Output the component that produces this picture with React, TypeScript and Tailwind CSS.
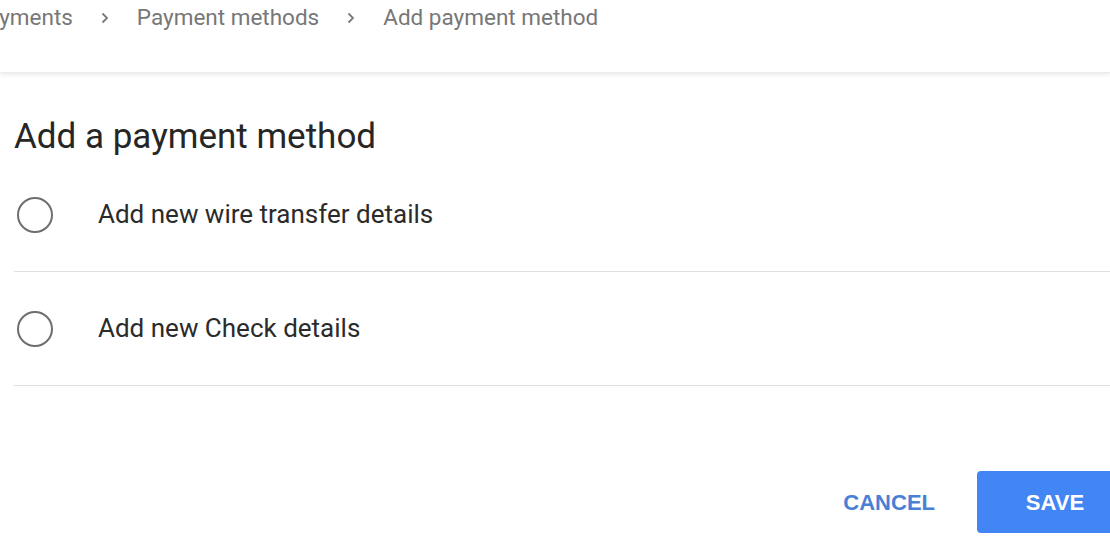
import React from "react";

function Chevron() {
  return (
    <svg width="8" height="12" viewBox="0 0 8 12" className="mx-[28px] mt-[2px]">
      <path d="M1.5 1.5 L6 6 L1.5 10.5" fill="none" stroke="#7a7a7a" strokeWidth="1.8" />
    </svg>
  );
}

function Option({ label }: { label: string }) {
  return (
    <div className="flex h-[114px] items-center border-b border-[#e0e0e0]">
      <div className="ml-[3px] h-[36px] w-[36px] rounded-full border-[2.5px] border-[#6e6e6e]" />
      <span className="ml-[45px] text-[26px] text-[#2b2b2b]">{label}</span>
    </div>
  );
}

export default function App() {
  return (
    <div
      className="relative h-[550px] w-[1110px] overflow-hidden bg-white"
      style={{ fontFamily: "Roboto, 'Noto Sans', sans-serif" }}
    >
      <div className="h-[73px] shadow-[0_2px_4px_rgba(0,0,0,0.08)] border-b border-[#ececec]">
        <div className="flex items-center text-[22.5px] leading-[34px] text-[#777777] ml-[-27px]">
          <span>Payments</span>
          <Chevron />
          <span>Payment methods</span>
          <Chevron />
          <span>Add payment method</span>
        </div>
      </div>
      <div className="pl-[14px]">
        <h1 className="mt-[44px] text-[35px] leading-[40px] text-[#262626]">Add a payment method</h1>
        <div className="mt-[1px]">
          <Option label="Add new wire transfer details" />
          <Option label="Add new Check details" />
        </div>
        <div className="mt-[85px] flex items-center justify-end">
          <button
            className="mr-[42px] text-[22px] font-bold text-[#4a7fd6]"
            style={{ fontFamily: "'Liberation Sans', Arial, sans-serif" }}
          >
            CANCEL
          </button>
          <button
            className="mr-[-20px] h-[62px] w-[153px] rounded-[4px] bg-[#4285f4] pl-[3px] text-[22px] font-bold text-white"
            style={{ fontFamily: "'Liberation Sans', Arial, sans-serif" }}
          >
            SAVE
          </button>
        </div>
      </div>
    </div>
  );
}
